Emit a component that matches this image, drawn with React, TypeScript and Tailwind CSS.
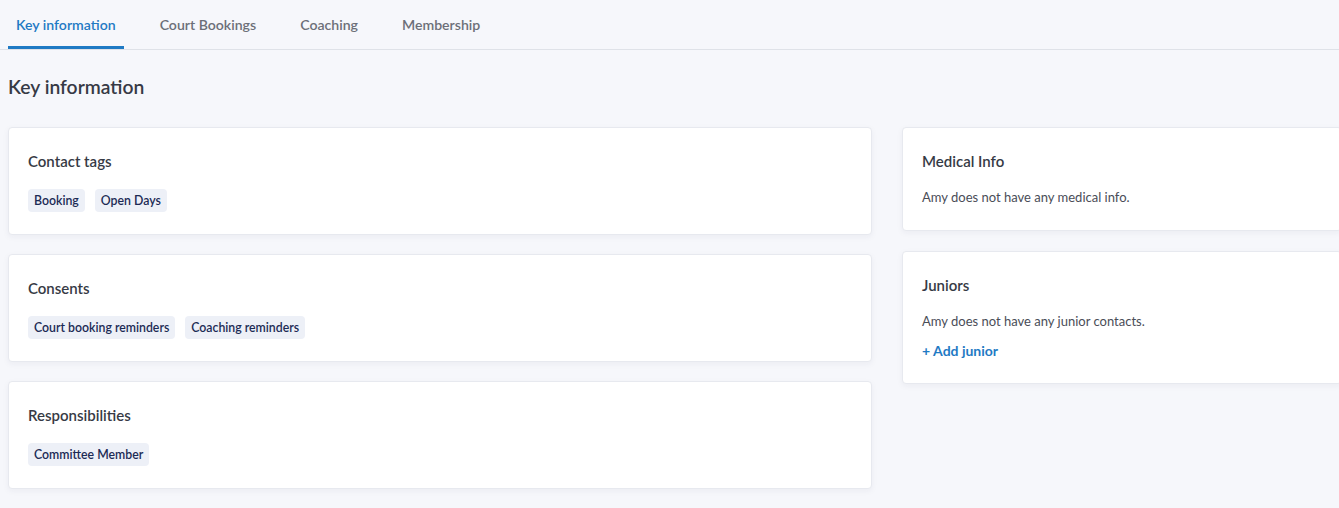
const tabs = ["Key information", "Court Bookings", "Coaching", "Membership"]

export default function App() {
  return (
    <div
      className="min-h-[508px] w-full overflow-hidden bg-[#f6f7fb] text-[#3a3d48]"
      style={{ fontFamily: "Lato, 'Open Sans', sans-serif" }}
    >
      <nav className="flex h-[50px] items-stretch gap-7 border-b border-[#dfe2e8] px-2">
        {tabs.map((tab, i) => (
          <div
            key={tab}
            className={
              i === 0
                ? "flex items-center border-b-[3px] border-[#1f7ac4] px-2 pt-[4px] text-[14.1px] font-semibold text-[#1f7ac4]"
                : "flex items-center border-b-[3px] border-transparent px-2 pt-[4px] text-[14.1px] font-semibold text-[#6c6f78]"
            }
          >
            {tab}
          </div>
        ))}
      </nav>

      <h1 className="px-2 pt-[25px] text-[19.3px] leading-[24px] font-semibold text-[#363a45]">
        Key information
      </h1>

      <div className="mt-[28px] grid grid-cols-[864px_440px] items-start gap-x-[30px] px-2">
        <div className="flex flex-col gap-[19.5px]">
          <TagCard title="Contact tags" tags={["Booking", "Open Days"]} />
          <TagCard title="Consents" tags={["Court booking reminders", "Coaching reminders"]} />
          <TagCard title="Responsibilities" tags={["Committee Member"]} />
        </div>
        <div className="flex flex-col gap-[20px]">
          <Card>
            <h2 className="text-[15px] leading-[20px] font-semibold text-[#363a45]">Medical Info</h2>
            <p className="mt-[17px] pb-[3px] text-[13px] leading-[18px] text-[#4a4d57]">
              Amy does not have any medical info.
            </p>
          </Card>
          <Card>
            <h2 className="text-[15px] leading-[20px] font-semibold text-[#363a45]">Juniors</h2>
            <p className="mt-[17px] text-[13px] leading-[18px] text-[#4a4d57]">
              Amy does not have any junior contacts.
            </p>
            <button className="mt-[12px] pb-[1px] text-[14px] leading-[18px] font-bold text-[#1f7ac4]">
              + Add junior
            </button>
          </Card>
        </div>
      </div>
    </div>
  )
}

function Card({ children }: { children: React.ReactNode }) {
  return (
    <section className="rounded-[4px] border border-[#e7e9ef] bg-white px-[19px] pt-[23px] pb-[21px] shadow-[0_2px_6px_rgba(30,40,80,0.05)]">
      {children}
    </section>
  )
}

function TagCard({ title, tags }: { title: string; tags: string[] }) {
  return (
    <Card>
      <h2 className="text-[15px] leading-[20px] font-semibold text-[#363a45]">{title}</h2>
      <div className="mt-[18px] flex flex-wrap gap-[10px] pb-[0.5px]">
        {tags.map((tag) => (
          <span
            key={tag}
            className="rounded-[4px] bg-[#edf0f7] px-[6px] py-[3px] text-[12.3px] leading-[17px] font-semibold text-[#1c2b55]"
          >
            {tag}
          </span>
        ))}
      </div>
    </Card>
  )
}
